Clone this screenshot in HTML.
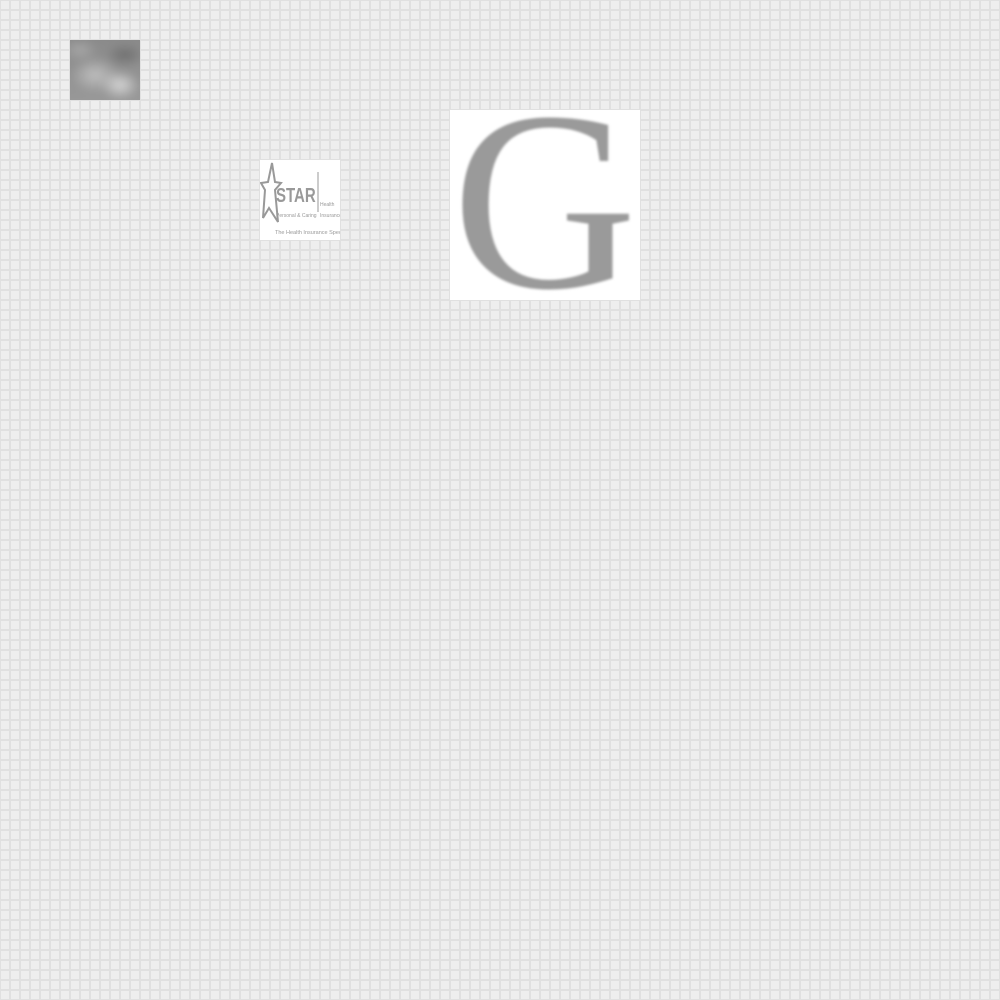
<!DOCTYPE html>
<html><head><style>
html,body{margin:0;padding:0;width:1000px;height:1000px;overflow:hidden}
body{background-color:#eeeeee;
background-image:linear-gradient(90deg,#e0e0e0 0,#e0e0e0 1px,transparent 1px,transparent 9px,#e0e0e0 9px),
linear-gradient(0deg,#e0e0e0 0,#e0e0e0 1px,transparent 1px,transparent 9px,#e0e0e0 9px);
background-size:10px 10px;position:relative;font-family:"Liberation Sans",sans-serif}
.abs{position:absolute}
</style></head><body>
<div class="abs" style="left:70px;top:40px;width:70px;height:60px;overflow:hidden;background:#8a8a8a">
<div class="abs" style="left:-10px;top:-10px;width:90px;height:80px;filter:blur(4px);background:
radial-gradient(ellipse 20px 15px at 60px 55px,#d8d8d8,transparent),
radial-gradient(ellipse 25px 18px at 35px 45px,#c0c0c0,transparent),
radial-gradient(ellipse 18px 12px at 20px 20px,#a8a8a8,transparent),
radial-gradient(ellipse 20px 12px at 65px 25px,#6e6e6e,transparent),
linear-gradient(#888,#9a9a9a)"></div>
</div>
<div class="abs" style="left:260px;top:160px;width:80px;height:80px;background:#fff;overflow:hidden">
<svg class="abs" style="left:0;top:0" width="80" height="80">
<polygon points="12,3 15,22 21,23 15,30 18,62 9,48 3,58 5,30 1,23 8,22" fill="none" stroke="#999" stroke-width="2"/>
<line x1="58" y1="12" x2="58" y2="52" stroke="#999" stroke-width="1"/>
</svg>
<div class="abs" style="left:16px;top:26px;font-size:20px;font-weight:bold;color:#999;line-height:20px;transform:scaleX(0.75);transform-origin:0 0">STAR</div>
<div class="abs" style="left:16px;top:53px;font-size:5px;color:#999;white-space:nowrap">Personal &amp; Caring</div>
<div class="abs" style="left:60px;top:40px;font-size:5px;color:#999;line-height:11px">Health<br>Insurance</div>
<div class="abs" style="left:15px;top:70px;font-size:5.5px;color:#999;white-space:nowrap">The Health Insurance Specialist</div>
</div>
<div class="abs" style="left:450px;top:110px;width:190px;height:190px;background:#fff;overflow:hidden">
<div class="abs" style="left:2px;top:-36px;font-family:'Liberation Serif',serif;font-size:256px;line-height:256px;color:#9a9a9a;filter:blur(1.2px)">G</div>
</div>
</body></html>
